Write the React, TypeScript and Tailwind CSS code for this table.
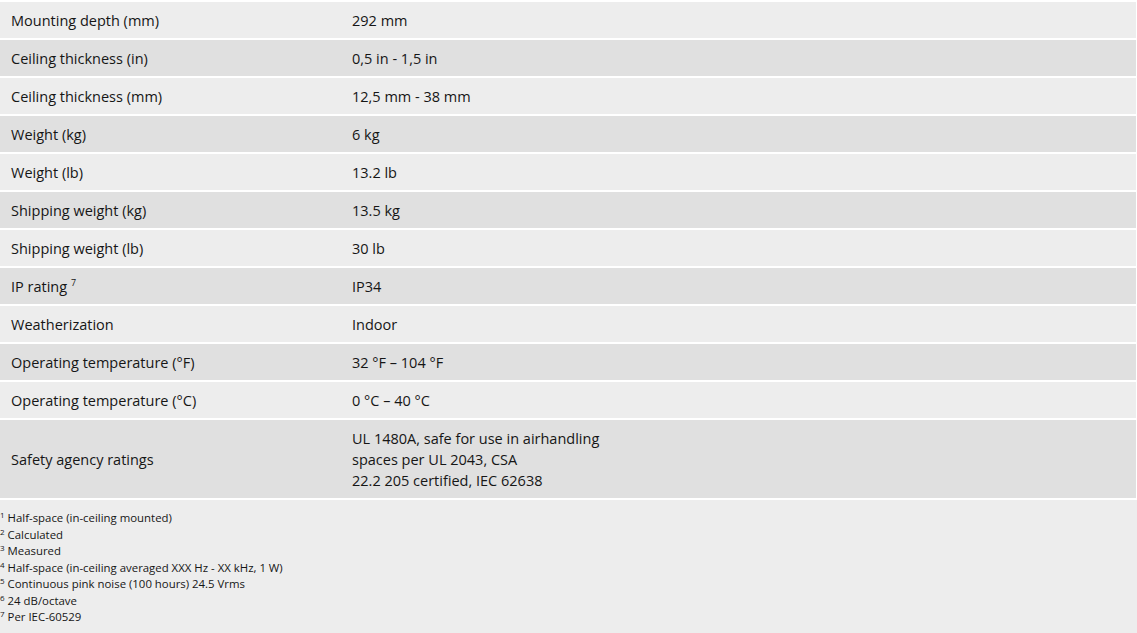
const rows: { label: string; sup?: string; value: string[] }[] = [
  { label: "Mounting depth (mm)", value: ["292 mm"] },
  { label: "Ceiling thickness (in)", value: ["0,5 in - 1,5 in"] },
  { label: "Ceiling thickness (mm)", value: ["12,5 mm - 38 mm"] },
  { label: "Weight (kg)", value: ["6 kg"] },
  { label: "Weight (lb)", value: ["13.2 lb"] },
  { label: "Shipping weight (kg)", value: ["13.5 kg"] },
  { label: "Shipping weight (lb)", value: ["30 lb"] },
  { label: "IP rating", sup: "7", value: ["IP34"] },
  { label: "Weatherization", value: ["Indoor"] },
  { label: "Operating temperature (°F)", value: ["32 °F – 104 °F"] },
  { label: "Operating temperature (°C)", value: ["0 °C – 40 °C"] },
  {
    label: "Safety agency ratings",
    value: [
      "UL 1480A, safe for use in airhandling",
      "spaces per UL 2043, CSA",
      "22.2 205 certified, IEC 62638",
    ],
  },
];

const notes = [
  "Half-space (in-ceiling mounted)",
  "Calculated",
  "Measured",
  "Half-space (in-ceiling averaged XXX Hz - XX kHz, 1 W)",
  "Continuous pink noise (100 hours) 24.5 Vrms",
  "24 dB/octave",
  "Per IEC-60529",
];

export default function App() {
  return (
    <div
      className="w-[1137px] h-[633px] overflow-hidden bg-[#ededed] text-[#161616]"
      style={{ fontFamily: "'Open Sans', 'Liberation Sans', sans-serif" }}
    >
      <div className="border-r border-white border-b-2">
        {rows.map((r, i) => (
          <div
            key={r.label}
            className={`flex items-center border-t-2 border-white text-[14.5px] pt-[1px] ${
              i % 2 === 0 ? "bg-[#ededed]" : "bg-[#e0e0e0]"
            } ${r.value.length > 1 ? "h-[80px]" : "h-[38px]"}`}
          >
            <div className="w-[352px] pl-[11px] shrink-0">
              {r.label}{" "}
              {r.sup && (
                <span className="text-[9px] leading-none relative -top-[6px]">{r.sup}</span>
              )}
            </div>
            <div className="leading-[21px]">
              {r.value.map((v) => (
                <div key={v}>{v}</div>
              ))}
            </div>
          </div>
        ))}
      </div>
      <div className="pt-[10px] text-[11.4px] leading-[16.5px]">
        {notes.map((n, i) => (
          <div key={n} className="whitespace-nowrap h-[16.5px]">
            <span className="text-[8px] leading-none relative -top-[4px] mr-[3px]">{i + 1}</span>
            {n}
          </div>
        ))}
      </div>
    </div>
  );
}
